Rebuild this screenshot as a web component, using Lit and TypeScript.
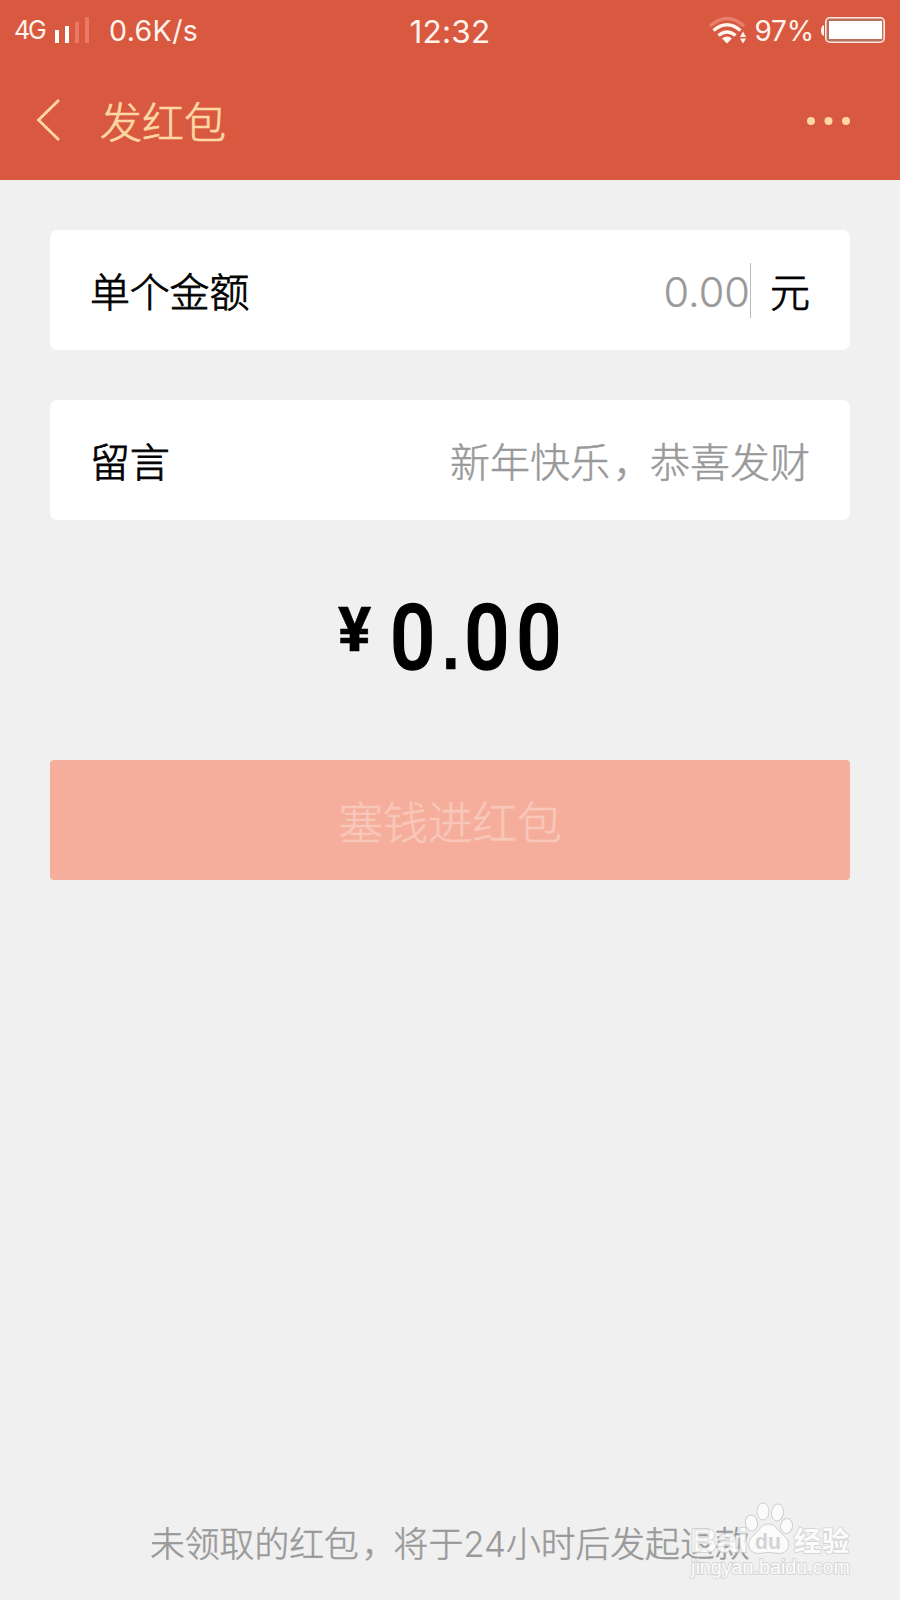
import { LitElement, html, css } from "lit";
import { customElement, property } from "lit/decorators.js";

@customElement("status-bar")
class StatusBar extends LitElement {
  static styles = css`
    :host { display: grid; grid-template-columns: 1fr auto 1fr; align-items: center; height: 60px; padding: 0 15px; color: #fff3ec; font-family: Inter, sans-serif; font-weight: 400; }
    .side { display: flex; align-items: center; height: 60px; white-space: nowrap; }
    .right { justify-content: flex-end; }
    svg { display: block; flex: none; }
    .net { font-size: 25px; letter-spacing: -2.200px; text-indent: -1px; width: 40px; }
    .speed { font-size: 28.500px; letter-spacing: 0.4px; margin-left: 18px; padding-top: 1px; }
    .time { font-size: 31.500px; letter-spacing: 0.2px; padding-top: 3px; }
    .pct { font-size: 28px; letter-spacing: -0.2px; margin: 2px 7px 0 7px; }
  `;
  render() {
    return html`
      <div class="side">
        <span class="net">4G</span>
        <svg width="36" height="60" viewBox="55 0 36 60">
          <path fill="#fff" d="M55 30h4v13h-4zM65 26h4v17h-4z" />
          <path fill="#ea7966" d="M75 22h4v21h-4zM85 17h4v26h-4z" />
        </svg>
        <span class="speed">0.6K/s</span>
      </div>
      <span class="time">12:32</span>
      <div class="side right">
        <svg width="38" height="60" viewBox="708 0 38 60" fill="none">
          <path d="M709 26Q726 11 743 26" stroke="#e87f6c" stroke-width="3.2" />
          <path d="M712.500 30.500Q726 19 739.500 30.500M717.500 35.500Q726 28.500 734.500 35.500" stroke="#fff6f0" stroke-width="3.4" />
          <path d="M721 38.500Q726 34.500 731 38.500L726 43.500zM739 37L742 31.500L745 37zM739 38.500L742 43.500L745 38.500z" fill="#fff6f0" />
        </svg>
        <span class="pct">97%</span>
        <svg width="64" height="60" viewBox="821 0 64 60">
          <path d="M824 25q-3 1-3 5.500t3 5.500z" fill="#fff6f0" />
          <rect x="825.800" y="17.800" width="58.400" height="24.400" rx="4" fill="#b9705d" stroke="#ffe9df" stroke-width="1.600" />
          <rect x="829" y="21" width="53" height="18" fill="#fff" />
        </svg>
      </div>
    `;
  }
}

@customElement("title-bar")
class TitleBar extends LitElement {
  @property() heading = "";
  static styles = css`
    :host { display: flex; align-items: center; height: 120px; padding: 0 50px 0 36px; color: #ffd7a3; }
    .heading { font-size: 42px; line-height: 60px; flex: 1; margin-left: 40px; -webkit-text-stroke: 0.7px; }
    svg { display: block; }
  `;
  render() {
    return html`
      <svg width="24" height="44" viewBox="0 0 24 44" fill="none" stroke="currentColor" stroke-width="2.800"><path d="M23 2L2.500 22L23 42" /></svg>
      <span class="heading">${this.heading}</span>
      <svg width="44" height="10" viewBox="0 0 44 10" fill="currentColor"><circle cx="5" cy="6" r="4" /><circle cx="22.500" cy="6" r="4" /><circle cx="40" cy="6" r="4" /></svg>
    `;
  }
}

@customElement("site-mark")
class SiteMark extends LitElement {
  static styles = css`
    :host { display: block; }
    svg { display: block; }
    .brand { font-family: "Liberation Sans", sans-serif; font-weight: 700; }
    .cjk { font-family: "Noto Sans CJK SC", sans-serif; font-weight: 700; }
    .url { font-family: "Liberation Sans", sans-serif; }
    .lettering { fill: #fff; stroke: #cfcfcf; stroke-width: 1.8px; paint-order: stroke; opacity: 0.8; }
  `;
  render() {
    return html`
      <svg width="170" height="85" viewBox="685 1495 170 85">
        <g class="lettering">
          <text class="brand" x="690" y="1552" font-size="34" textLength="58" lengthAdjust="spacingAndGlyphs">Bai</text>
          <text class="cjk" x="794" y="1551" font-size="27" textLength="55">经验</text>
          <text class="url" x="691" y="1574" font-size="19.500" textLength="159" lengthAdjust="spacingAndGlyphs">jingyan.baidu.com</text>
        </g>
        <g fill="#fbfbfb" stroke="#cfcfcf" stroke-width="1">
          <ellipse cx="751.500" cy="1523" rx="6" ry="8" transform="rotate(-8 751.500 1523)" />
          <ellipse cx="763" cy="1511.500" rx="6" ry="8.500" />
          <ellipse cx="777.500" cy="1512.500" rx="6" ry="8.500" transform="rotate(8 777.500 1512.500)" />
          <ellipse cx="786.500" cy="1526" rx="6" ry="7.500" transform="rotate(8 786.500 1526)" />
          <path d="M768.500 1524C761 1524 760 1530 755 1534C749 1539 747 1544 750 1549C754 1556 762 1552.500 768.500 1552.500C775 1552.500 782 1556 787 1550C791 1544 787 1538 782 1534C777 1530 776 1524 768.500 1524Z" />
        </g>
        <text class="brand" x="755" y="1549" font-size="22" fill="#d3d3d3" textLength="26" lengthAdjust="spacingAndGlyphs">du</text>
      </svg>
    `;
  }
}

@customElement("app-root")
class AppRoot extends LitElement {
  static styles = css`
    :host { display: flex; flex-direction: column; position: relative; height: 1600px; background: #f0f0f0; overflow: hidden; font-family: "Noto Sans CJK SC", sans-serif; font-weight: 300; }
    .top { height: 180px; background: #d8593f; }
    .form { display: flex; flex-direction: column; gap: 50px; padding: 50px 50px 0; }
    .card { display: flex; align-items: center; height: 120px; box-sizing: border-box; padding: 0 40px; background: #fff; border-radius: 7px; font-size: 40px; line-height: 60px; color: #000; }
    .label { flex: 1; letter-spacing: -0.2px; -webkit-text-stroke: 0.8px; }
    .hint { color: #999; -webkit-text-stroke: 0.5px; }
    .comma { margin: 0 -3px 0 3px; }
    .amount { font-family: Inter, sans-serif; font-size: 41.500px; padding-top: 4px; -webkit-text-stroke: 0.2px; }
    .caret { width: 1px; height: 55px; background: #bbb; margin-right: 19px; }
    .unit { -webkit-text-stroke: 0.8px; }
    .total { display: flex; justify-content: center; height: 140px; margin: 0; color: #000; }
    .yen { font: 700 62px/62px Roboto, sans-serif; padding: 29px 0 0 1px; width: 52px; -webkit-text-stroke: 0.6px; }
    .sum { font: 500 91px/92px Roboto, sans-serif; letter-spacing: 7.6px; transform-origin: left top; transform: scaleX(.875); padding-top: 22px; width: 173px; white-space: nowrap; -webkit-text-stroke: 1.4px; }
    .point { font: 700 72px/72px "Liberation Sans", sans-serif; -webkit-text-stroke: 0.5px; margin: 0 -2px 0 0; }
    .submit { display: flex; align-items: center; justify-content: center; height: 120px; border: 0; padding: 0; border-radius: 4px; background: #f4ae9b; color: #f9c7ba; font-family: inherit; font-size: 45px; letter-spacing: -0.3px; font-weight: 300; -webkit-text-stroke: 0.5px; }
    .note { margin: auto 0 0 150px; height: 60px; padding-bottom: 28px; font-size: 34.800px; line-height: 60px; color: #999; white-space: nowrap; -webkit-text-stroke: 0.5px; }
    .num { font-family: Inter, sans-serif; -webkit-text-stroke: 0.1px; }
    .mark { position: absolute; left: 685px; top: 1495px; }
  `;
  render() {
    return html`
      <header class="top">
        <status-bar></status-bar>
        <title-bar heading="发红包"></title-bar>
      </header>
      <main class="form">
        <div class="card"><span class="label">单个金额</span><span class="hint amount">0.00</span><span class="caret"></span><span class="unit">元</span></div>
        <div class="card"><span class="label">留言</span><span class="hint">新年快乐<span class="comma">，</span>恭喜发财</span></div>
        <div class="total"><span class="yen">¥</span><span class="sum">0<span class="point">.</span>00</span></div>
        <button class="submit">塞钱进红包</button>
      </main>
      <footer class="note">未领取的红包<span class="comma">，</span>将于<span class="num">24</span>小时后发起退款</footer>
      <site-mark class="mark"></site-mark>
    `;
  }
}
